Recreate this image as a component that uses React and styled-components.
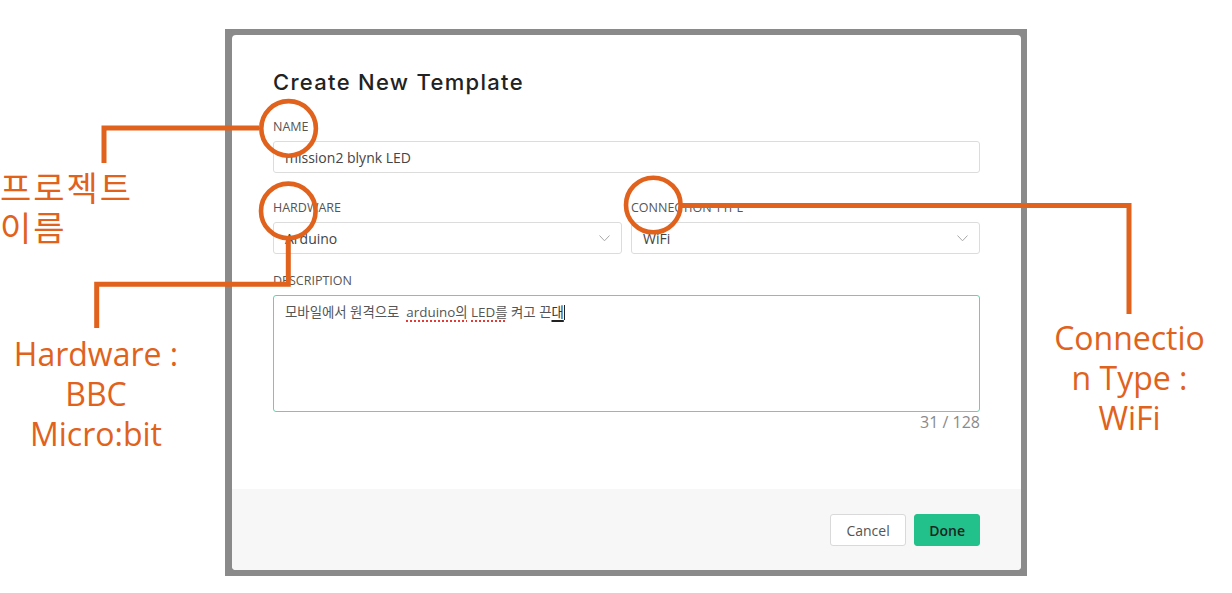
import React from 'react'
import styled, { createGlobalStyle } from 'styled-components'

const ORANGE = '#e0621c'

const GlobalStyle = createGlobalStyle`
  html, body {
    margin: 0;
    padding: 0;
    background: #fff;
  }
  body {
    font-family: "Open Sans", "Noto Sans CJK KR", sans-serif;
  }
`

const Stage = styled.div`
  position: relative;
  width: 1232px;
  height: 593px;
  display: flex;
  align-items: flex-start;
  overflow: hidden;
`

const LeftNotes = styled.div`
  width: 225px;
  flex: none;
  display: flex;
  flex-direction: column;
`

const RightNotes = styled.div`
  flex: 1;
  display: flex;
  flex-direction: column;
  align-items: center;
`

const Note = styled.div`
  color: ${ORANGE};
  font-family: ${p => (p.$korean ? '"Noto Sans CJK KR", sans-serif' : '"Open Sans", sans-serif')};
  font-size: ${p => (p.$korean ? 34 : 32)}px;
  line-height: 40px;
  letter-spacing: ${p => (p.$korean ? '2px' : '0')};
  text-align: ${p => p.$align || 'left'};
  margin-top: ${p => p.$top}px;
  width: ${p => (p.$width ? p.$width + 'px' : 'auto')};
  span {
    display: block;
    white-space: nowrap;
  }
`

const Frame = styled.div`
  flex: none;
  margin-top: 29px;
  width: 802px;
  height: 547px;
  box-sizing: border-box;
  padding: 6px 6px 6px 7px;
  background: #8a8a8a;
`

const Modal = styled.div`
  height: 100%;
  background: #fff;
  border-radius: 4px;
  display: flex;
  flex-direction: column;
  overflow: hidden;
`

const Body = styled.div`
  flex: 1;
  padding: 32px 41px 0;
`

const Title = styled.h2`
  margin: 0 0 22px;
  font-family: Inter, "Open Sans", sans-serif;
  font-weight: 500;
  font-size: 22px;
  line-height: 30px;
  letter-spacing: 1.3px;
  color: #222;
`

const Field = styled.div`
  display: flex;
  flex-direction: column;
  min-width: 0;
  margin-bottom: ${p => p.$gap || 0}px;
`

const Row = styled.div`
  display: grid;
  grid-template-columns: 1fr 1fr;
  column-gap: 9px;
  margin-bottom: ${p => p.$gap || 0}px;
`

const Label = styled.label`
  font-size: 12.5px;
  line-height: 16px;
  color: #555;
  text-transform: uppercase;
  margin-bottom: 6px;
`

const Input = styled.div`
  height: 32px;
  box-sizing: border-box;
  border: 1px solid #dcdcdc;
  border-radius: 3px;
  padding: 0 11px;
  display: flex;
  align-items: center;
  justify-content: space-between;
  font-size: 14px;
  color: #444;
`

const TextArea = styled.div`
  height: 117px;
  box-sizing: border-box;
  border: 1px solid #66d2ac;
  border-radius: 3px;
  padding: 7px 11px;
  font-family: "Open Sans", "Noto Sans CJK KR", sans-serif;
  font-size: 13.4px;
  line-height: 18px;
  color: #555;
  white-space: pre-wrap;
`

const Misspelled = styled.span`
  text-decoration: underline dotted #e53935;
  text-decoration-thickness: 1.5px;
  text-underline-offset: 3px;
`

const Composing = styled.span`
  color: #333;
  text-decoration: underline solid #222;
  text-decoration-thickness: 1.5px;
  text-underline-offset: 3px;
`

const Caret = styled.span`
  display: inline-block;
  width: 1px;
  height: 15px;
  background: #222;
  vertical-align: -3px;
`

const Counter = styled.div`
  text-align: right;
  font-size: 16px;
  line-height: 20px;
  color: #8a8a8a;
`

const Footer = styled.div`
  flex: none;
  height: 81px;
  box-sizing: border-box;
  background: #f7f7f7;
  display: flex;
  align-items: center;
  justify-content: flex-end;
  gap: 8px;
  padding: 1px 41px 0;
`

const Button = styled.button`
  height: 32px;
  box-sizing: border-box;
  padding: 0 ${p => (p.$primary ? 14 : 15.5)}px;
  border-radius: 3px;
  font-family: "Open Sans", sans-serif;
  font-size: 14px;
  font-weight: ${p => (p.$primary ? 600 : 400)};
  color: ${p => (p.$primary ? '#1c2521' : '#555')};
  background: ${p => (p.$primary ? '#22c08b' : '#fff')};
  border: 1px solid ${p => (p.$primary ? '#22c08b' : '#d9d9d9')};
`

const Overlay = styled.svg`
  position: absolute;
  left: 0;
  top: 0;
  pointer-events: none;
`

const Chevron = () => (
  <svg width="11" height="7" viewBox="0 0 11 7">
    <polyline points="0.5,0.5 5.5,5.8 10.5,0.5" fill="none" stroke="#a8a8a8" strokeWidth="1" />
  </svg>
)

const Annotations = () => (
  <Overlay width="1232" height="593" viewBox="0 0 1232 593">
    <g fill="none" stroke={ORANGE}>
      <circle cx="288.6" cy="128.4" r="27.3" strokeWidth="4.6" />
      <circle cx="288.3" cy="210.9" r="27.3" strokeWidth="4.6" />
      <circle cx="653.3" cy="205" r="27.3" strokeWidth="4.6" />
      <path d="M259 128 H104 V163" strokeWidth="5" strokeLinejoin="miter" />
      <path d="M288.3 238 V284.2 H96.7 V328" strokeWidth="5" strokeLinejoin="miter" />
      <path d="M681 205.5 H1129 V314" strokeWidth="5" strokeLinejoin="miter" />
    </g>
  </Overlay>
)

export default function App() {
  return (
    <>
      <GlobalStyle />
      <Stage>
        <LeftNotes>
          <Note $korean $top={167}>
            <span>프로젝트</span>
            <span>이름</span>
          </Note>
          <Note $top={87} $width={192} $align="center">
            <span>Hardware :</span>
            <span>BBC</span>
            <span>Micro:bit</span>
          </Note>
        </LeftNotes>

        <Frame>
          <Modal>
            <Body>
              <Title>Create New Template</Title>
              <Field $gap={27}>
                <Label>Name</Label>
                <Input>mission2 blynk LED</Input>
              </Field>
              <Row $gap={19}>
                <Field>
                  <Label>Hardware</Label>
                  <Input>
                    Arduino
                    <Chevron />
                  </Input>
                </Field>
                <Field>
                  <Label>Connection Type</Label>
                  <Input>
                    WiFi
                    <Chevron />
                  </Input>
                </Field>
              </Row>
              <Field>
                <Label>Description</Label>
                <TextArea>
                  {'모바일에서 원격으로  '}
                  <Misspelled>arduino의</Misspelled> <Misspelled>LED를</Misspelled>
                  {' 켜고 끈'}
                  <Composing>대</Composing>
                  <Caret />
                </TextArea>
              </Field>
              <Counter>31 / 128</Counter>
            </Body>
            <Footer>
              <Button>Cancel</Button>
              <Button $primary>Done</Button>
            </Footer>
          </Modal>
        </Frame>

        <RightNotes>
          <Note $top={318} $align="center">
            <span>Connectio</span>
            <span>n Type :</span>
            <span>WiFi</span>
          </Note>
        </RightNotes>

        <Annotations />
      </Stage>
    </>
  )
}
